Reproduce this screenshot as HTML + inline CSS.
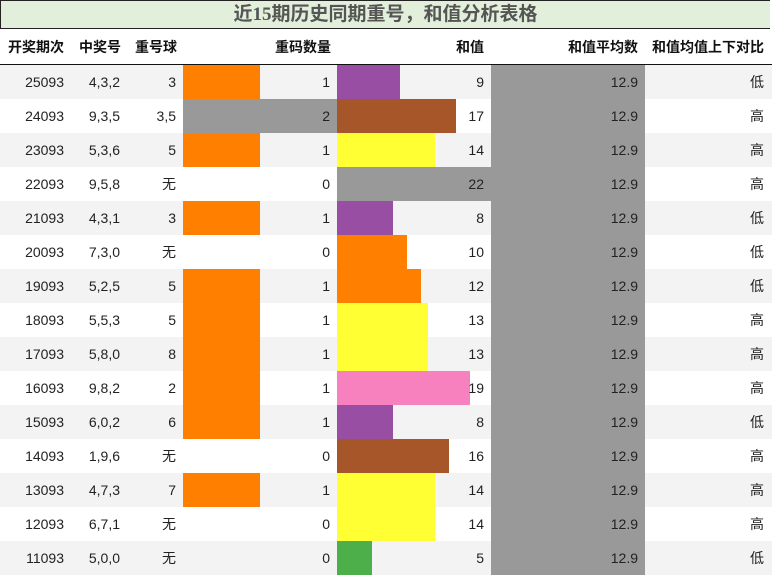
<!DOCTYPE html>
<html><head><meta charset="utf-8"><style>
body{margin:0;width:772px;height:576px;overflow:hidden;background:#fff;font-family:"Liberation Sans","Noto Sans CJK SC",sans-serif;font-size:14px;color:#222}
.t{position:absolute;left:0;top:0;width:769px;height:27px;background:#e2efda;border:1px solid #222;border-right:none;text-align:center;font:bold 19px/27px "Liberation Serif","Noto Sans CJK SC",sans-serif;color:#555}
.h{position:absolute;top:29px;height:35px;line-height:37px;font-weight:bold;font-size:14px;color:#111}
.hl{position:absolute;left:0;top:64px;width:772px;height:2px;background:#111}
.r{position:absolute;left:0;width:772px;height:34px}
.c{position:absolute;top:0;height:34px;line-height:34px;text-align:right}
.b{position:absolute;top:0;height:34px}
</style></head><body>
<div class="t">近15期历史同期重号，和值分析表格</div>
<div class="h" style="left:8px">开奖期次</div>
<div class="h" style="left:79px">中奖号</div>
<div class="h" style="left:135px">重号球</div>
<div class="h" style="left:275px">重码数量</div>
<div class="h" style="left:456px">和值</div>
<div class="h" style="left:568px">和值平均数</div>
<div class="h" style="left:652px">和值均值上下对比</div>
<div class="hl"></div>
<div id="rows"></div>
<script>
var d=[["25093","4,3,2","3",1,9,"低"],["24093","9,3,5","3,5",2,17,"高"],["23093","5,3,6","5",1,14,"高"],["22093","9,5,8","无",0,22,"高"],["21093","4,3,1","3",1,8,"低"],["20093","7,3,0","无",0,10,"低"],["19093","5,2,5","5",1,12,"低"],["18093","5,5,3","5",1,13,"高"],["17093","5,8,0","8",1,13,"高"],["16093","9,8,2","2",1,19,"高"],["15093","6,0,2","6",1,8,"低"],["14093","1,9,6","无",0,16,"高"],["13093","4,7,3","7",1,14,"高"],["12093","6,7,1","无",0,14,"高"],["11093","5,0,0","无",0,5,"低"]];
function col(s){if(s<=7)return"#4daf4a";if(s<=9)return"#984ea3";if(s<=12)return"#ff7f00";if(s<=15)return"#ffff33";if(s<=17)return"#a65628";if(s<=19)return"#f781bf";return"#999999";}
var h="";
d.forEach(function(r,i){
var y=65+i*34,bg=i%2?"#fff":"#f3f3f3";
h+='<div class="r" style="top:'+y+'px;background:'+bg+'">';
if(r[3]>0)h+='<div class="b" style="left:183px;width:'+(r[3]==2?154:77)+'px;background:'+(r[3]==2?"#999999":"#ff7f00")+'"></div>';
h+='<div class="b" style="left:337px;width:'+Math.round(r[4]/22*154)+'px;background:'+col(r[4])+'"></div>';
h+='<div class="b" style="left:491px;width:154px;background:#999999"></div>';
h+='<div class="c" style="right:708px">'+r[0]+'</div>';
h+='<div class="c" style="right:652px">'+r[1]+'</div>';
h+='<div class="c" style="right:596px">'+r[2]+'</div>';
h+='<div class="c" style="right:442px">'+r[3]+'</div>';
h+='<div class="c" style="right:288px">'+r[4]+'</div>';
h+='<div class="c" style="right:134px">12.9</div>';
h+='<div class="c" style="right:8px">'+r[5]+'</div>';
h+='</div>';});
document.getElementById("rows").innerHTML=h;
</script>
</body></html>
